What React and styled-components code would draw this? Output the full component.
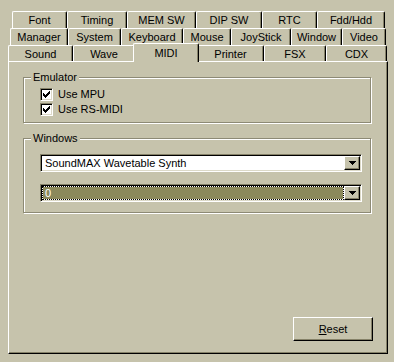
import React from "react";
import styled, { createGlobalStyle } from "styled-components";

const GlobalStyle = createGlobalStyle`
    body {
        margin: 0;
        background: #c6c3ac;
        font-family: "Liberation Sans", Arial, sans-serif;
        font-size: 11px;
        color: #000;
    }
`

const StyledWindow = styled.div`
    width: 394px;
    height: 362px;
    background: #c6c3ac;
    padding-top: 11px;
    box-sizing: border-box;
`
const StyledTabRow = styled.div`
    display: flex;
    height: ${(p) => p.$height}px;
    padding-left: ${(p) => p.$left}px;
`
const StyledTab = styled.div`
    position: relative;
    box-sizing: border-box;
    width: ${(p) => p.$width}px;
    height: 100%;
    border-top: 1px solid #fff;
    border-left: 1px solid #fff;
    border-right: 1px solid #000;
    border-radius: 2px 2px 0 0;
    box-shadow: inset -1px 0 0 #858168;
    background: #c6c3ac;
    display: flex;
    justify-content: center;
    padding-top: 2px;
    white-space: nowrap;
    ${(p) => p.$selected && `
        width: ${p.$width + 4}px;
        margin: 0 -2px;
        top: -2px;
        height: calc(100% + 3px);
        z-index: 1;
        padding-top: 3px;
    `}
`
const StyledPanel = styled.div`
    margin-left: 8px;
    width: 380px;
    height: 293px;
    box-sizing: border-box;
    border-top: 1px solid #fff;
    border-left: 1px solid #fff;
    border-right: 1px solid #000;
    border-bottom: 1px solid #000;
    box-shadow: inset -1px -1px 0 #858168;
    display: flex;
    flex-direction: column;
    padding: 15px 16px 12px 14px;
`
const StyledGroup = styled.div`
    position: relative;
    height: ${(p) => p.$height}px;
    box-sizing: border-box;
    border: 1px solid #8d8a75;
    box-shadow: inset 1px 1px 0 #fff, 1px 1px 0 #fff;
    margin-bottom: 15px;
    padding: ${(p) => p.$pad};
    display: flex;
    flex-direction: column;
    gap: ${(p) => p.$gap}px;
`
const StyledLegend = styled.span`
    position: absolute;
    top: -8px;
    left: 7px;
    background: #c6c3ac;
    padding: 0 2px;
    line-height: 14px;
`
const StyledCheckRow = styled.label`
    display: flex;
    align-items: center;
    gap: 5px;
    height: 13px;
    line-height: 13px;
`
const StyledCheckBox = styled.span`
    width: 13px;
    height: 13px;
    box-sizing: border-box;
    border: 1px solid;
    border-color: #858168 #fff #fff #858168;
    box-shadow: inset 1px 1px 0 #000, inset -1px -1px 0 #dcd9c8;
    background: #fff;
    display: flex;
    align-items: center;
    justify-content: center;
`
const StyledCombo = styled.div`
    display: flex;
    height: 18px;
    width: 322px;
    box-sizing: border-box;
    border: 1px solid;
    border-color: #858168 #fff #fff #858168;
    box-shadow: inset 1px 1px 0 #000, inset -1px -1px 0 #dcd9c8;
    background: #fff;
    padding: 2px;
`
const StyledComboText = styled.div`
    flex: 1;
    display: flex;
    align-items: center;
    padding-left: 2px;
    ${(p) => p.$focused && `
        background: #8b895b;
        color: #ffffff;
        outline: 1px dotted #000;
        outline-offset: 0;
        margin-right: 1px;
    `}
`
const StyledDropButton = styled.div`
    width: 16px;
    box-sizing: border-box;
    background: #c6c3ac;
    border: 1px solid;
    border-color: #fff #000 #000 #fff;
    box-shadow: inset -1px -1px 0 #858168;
    display: flex;
    align-items: center;
    justify-content: center;
    margin: -1px -1px -1px 0;
`
const StyledFooter = styled.div`
    margin-top: auto;
    display: flex;
    justify-content: flex-end;
    margin-right: -2px;
`
const StyledButton = styled.button`
    width: 80px;
    height: 24px;
    box-sizing: border-box;
    background: #c6c3ac;
    border: 1px solid;
    border-color: #fff #000 #000 #fff;
    box-shadow: inset -1px -1px 0 #858168;
    font-family: inherit;
    font-size: 11px;
    color: #000;
    padding: 0;
`

const rows = [
    { left: 12, height: 17, tabs: [["Font", 55], ["Timing", 60], ["MEM SW", 69], ["DIP SW", 66], ["RTC", 55], ["Fdd/Hdd", 68]] },
    { left: 10, height: 17, tabs: [["Manager", 58], ["System", 53], ["Keyboard", 62], ["Mouse", 48], ["JoyStick", 60], ["Window", 51], ["Video", 44]] },
    { left: 8, height: 16, tabs: [["Sound", 65], ["Wave", 62], ["MIDI", 62], ["Printer", 67], ["FSX", 62], ["CDX", 61]] },
]

// classic 7x7 check mark, drawn pixel by pixel
const checkPixels = [
    [6, 0], [5, 1], [6, 1], [0, 2], [4, 2], [5, 2], [6, 2],
    [0, 3], [1, 3], [3, 3], [4, 3], [5, 3], [0, 4], [1, 4], [2, 4], [3, 4], [4, 4],
    [1, 5], [2, 5], [3, 5], [2, 6],
]

const Check = () => (
    <svg width="7" height="7" viewBox="0 0 7 7" shapeRendering="crispEdges">
        {checkPixels.map(([x, y]) => <rect key={`${x}-${y}`} x={x} y={y} width="1" height="1" fill="#000" />)}
    </svg>
)

const Arrow = () => (
    <svg width="7" height="4" viewBox="0 0 7 4" shapeRendering="crispEdges">
        <rect x="0" y="0" width="7" height="1" fill="#000" />
        <rect x="1" y="1" width="5" height="1" fill="#000" />
        <rect x="2" y="2" width="3" height="1" fill="#000" />
        <rect x="3" y="3" width="1" height="1" fill="#000" />
    </svg>
)

const App = () => {
    return (
        <StyledWindow>
            <GlobalStyle />
            {rows.map((row, i) => (
                <StyledTabRow key={i} $left={row.left} $height={row.height}>
                    {row.tabs.map(([name, width]) => (
                        <StyledTab key={name} $width={width} $selected={name === "MIDI"}>
                            {name}
                        </StyledTab>
                    ))}
                </StyledTabRow>
            ))}
            <StyledPanel>
                <StyledGroup $height={46} $pad="10px 0 0 16px" $gap={2}>
                    <StyledLegend>Emulator</StyledLegend>
                    <StyledCheckRow><StyledCheckBox><Check /></StyledCheckBox>Use MPU</StyledCheckRow>
                    <StyledCheckRow><StyledCheckBox><Check /></StyledCheckBox>Use RS-MIDI</StyledCheckRow>
                </StyledGroup>
                <StyledGroup $height={75} $pad="15px 0 0 16px" $gap={12}>
                    <StyledLegend>Windows</StyledLegend>
                    <StyledCombo>
                        <StyledComboText>SoundMAX Wavetable Synth</StyledComboText>
                        <StyledDropButton><Arrow /></StyledDropButton>
                    </StyledCombo>
                    <StyledCombo>
                        <StyledComboText $focused>0</StyledComboText>
                        <StyledDropButton><Arrow /></StyledDropButton>
                    </StyledCombo>
                </StyledGroup>
                <StyledFooter>
                    <StyledButton><u>R</u>eset</StyledButton>
                </StyledFooter>
            </StyledPanel>
        </StyledWindow>
    )
}

export default App
